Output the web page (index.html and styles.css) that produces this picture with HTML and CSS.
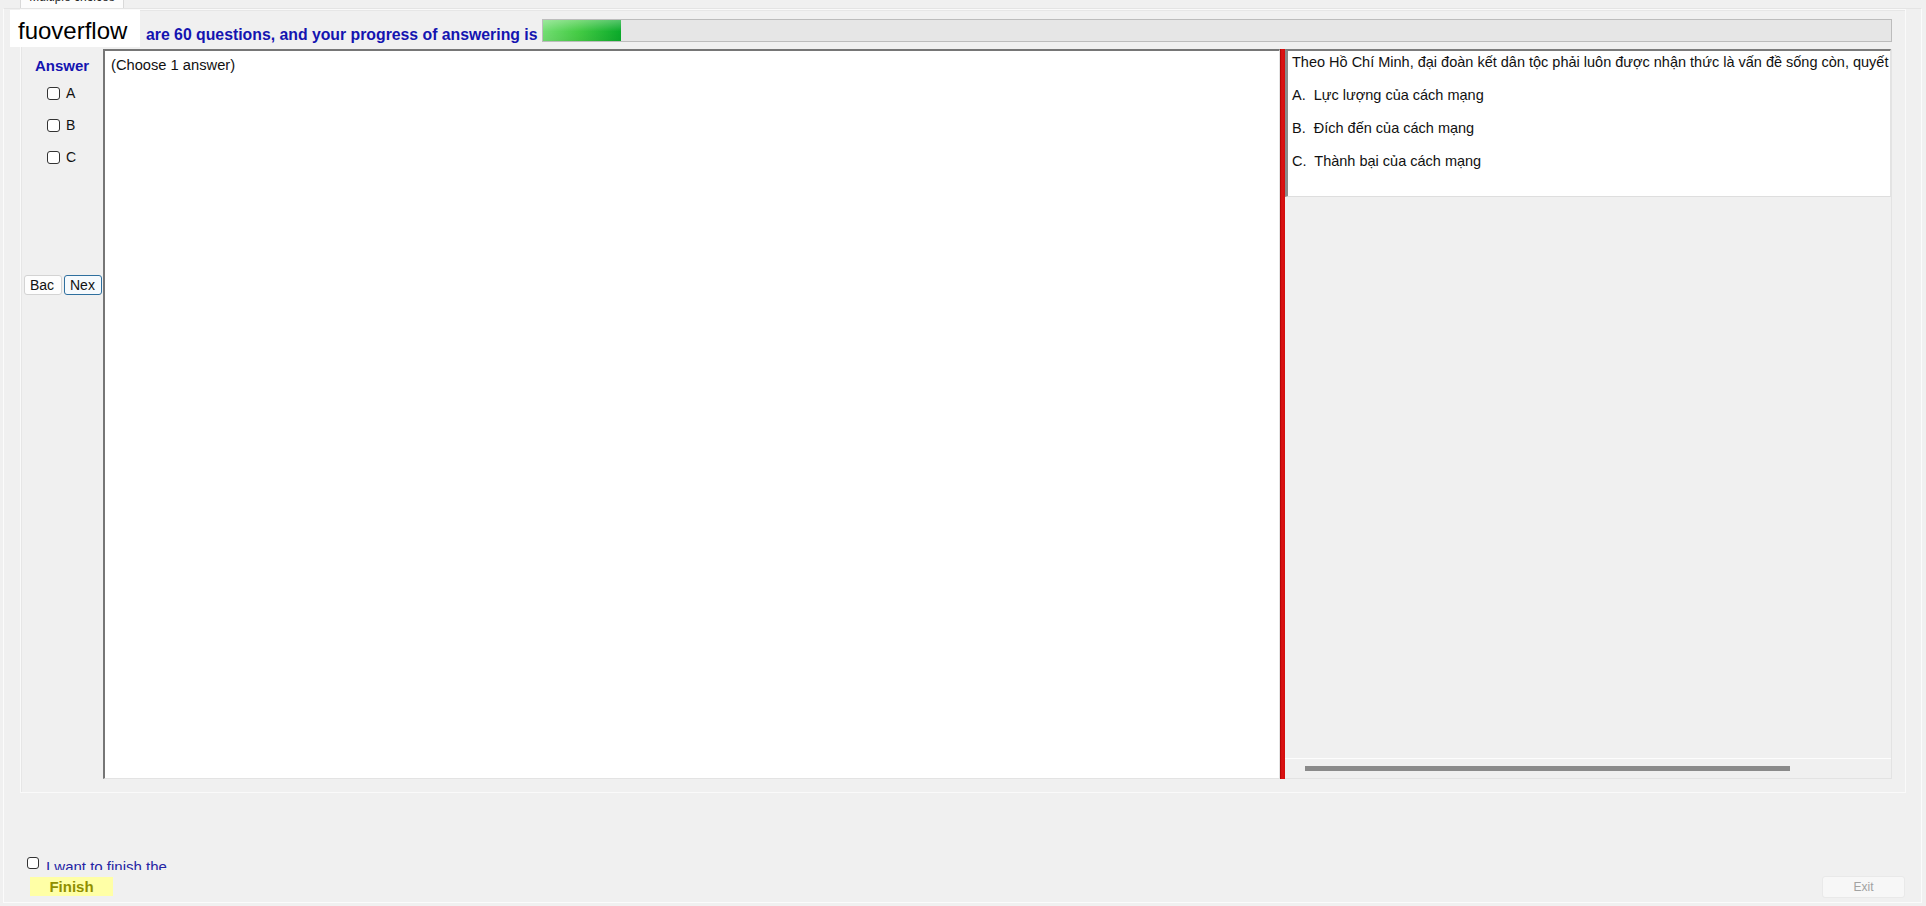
FILE: index.html
```html
<!DOCTYPE html>
<html lang="vi">
<head>
<meta charset="utf-8">
<title>Multiple choices</title>
<link rel="stylesheet" href="styles.css">
</head>
<body>
<div class="app">
  <div class="tabstrip"><div class="tab"><span class="tab-label">Multiple choices</span></div></div>
  <div class="tabpage">
    <div class="group">
      <div class="header">
        <div class="progress-text">are 60 questions, and your progress of answering is</div>
        <div class="progress"><div class="progress-fill" style="width:78px"></div></div>
      </div>
      <div class="main">
        <div class="answers">
          <div class="answers-title">Answer</div>
          <label class="opt"><input type="checkbox" class="cb"><span>A</span></label>
          <label class="opt"><input type="checkbox" class="cb"><span>B</span></label>
          <label class="opt"><input type="checkbox" class="cb"><span>C</span></label>
          <div class="nav">
            <button class="btn">Bac</button>
            <button class="btn btn-focus">Nex</button>
          </div>
        </div>
        <div class="question"><div class="question-text">(Choose 1 answer)</div></div>
        <div class="splitter"></div>
        <div class="viewer">
          <div class="doc">
            <div class="doc-line">Theo Hồ Chí Minh, đại đoàn kết dân tộc phải luôn được nhận thức là vấn đề sống còn, quyết</div>
            <div class="doc-line">A.  Lực lượng của cách mạng</div>
            <div class="doc-line">B.  Đích đến của cách mạng</div>
            <div class="doc-line">C.  Thành bại của cách mạng</div>
          </div>
          <div class="doc-empty"></div>
          <div class="hscroll"><div class="hscroll-thumb"></div></div>
        </div>
      </div>
    </div>
    <div class="footer">
      <label class="confirm"><input type="checkbox" class="cb cb-small"><span>I want to finish the</span></label>
      <div class="actions">
        <button class="finish">Finish</button>
        <button class="exit">Exit</button>
      </div>
    </div>
  </div>
  <div class="brand">fuoverflow</div>
</div>
</body>
</html>
```
FILE: styles.css
```css
* { box-sizing: border-box; }
html, body { margin: 0; padding: 0; }
body {
  background: #f0f0f0;
  font-family: "Liberation Sans", Arial, sans-serif;
  color: #000;
}
.app {
  position: relative;
  width: 1926px;
  height: 906px;
  overflow: hidden;
  background: #f0f0f0;
}
.tabstrip {
  height: 8px;
  padding-left: 20px;
  display: flex;
}
.tab {
  width: 104px;
  height: 8px;
  background: #fcfcfc;
  border-left: 1px solid #d9d9d9;
  border-right: 1px solid #d9d9d9;
  overflow: hidden;
  font-size: 12px;
  color: #222;
  text-align: center;
}
.tab-label {
  display: block;
  line-height: 14px;
  margin-top: -10px;
}
.tabpage {
  margin-left: 3px;
  width: 1919px;
  height: 895px;
  border: 1px solid #fbfbfb;
  border-top-color: #e4e4e4;
  padding-left: 16px;
}
.group {
  width: 1886px;
  height: 784px;
  border: 1px solid #fafafa;
  box-shadow: inset 1px 1px 0 #e6e6e6;
  padding-right: 13px;
}
.header {
  display: flex;
  height: 39px;
  padding-top: 9px;
}
.progress-text {
  margin-left: 125px;
  width: 396px;
  margin-top: 7px;
  font-size: 15.8px;
  line-height: 17px;
  font-weight: bold;
  color: #1414b0;
  white-space: nowrap;
}
.progress {
  width: 1351px;
  height: 23px;
  border: 1px solid #bcbcbc;
  background: #e6e6e6;
}
.progress-fill {
  height: 100%;
  background:
    linear-gradient(to bottom, rgba(255,255,255,0.3), rgba(255,255,255,0) 55%, rgba(0,0,0,0.04)),
    linear-gradient(to right, #72de72, #45cc45 45%, #0aaa2a);
}
.main {
  display: flex;
  height: 730px;
}
.answers {
  width: 82px;
  padding-top: 8px;
  display: flex;
  flex-direction: column;
}
.answers-title {
  font-size: 15px;
  line-height: 17px;
  font-weight: bold;
  color: #1414b0;
  text-align: center;
  margin-bottom: 3px;
}
.opt {
  display: flex;
  align-items: center;
  height: 32px;
  padding-left: 26px;
  gap: 6px;
  font-size: 14px;
  color: #111;
}
.cb {
  appearance: none;
  -webkit-appearance: none;
  width: 13px;
  height: 13px;
  margin: 0;
  border: 1px solid #333;
  border-radius: 3px;
  background: #fff;
  flex: none;
}
.nav {
  display: flex;
  gap: 2px;
  margin-top: 102px;
  padding-left: 3px;
}
.btn {
  width: 38px;
  height: 20px;
  padding: 0 0 0 5px;
  font-family: "Liberation Sans", Arial, sans-serif;
  font-size: 14px;
  line-height: 18px;
  text-align: left;
  color: #111;
  background: #fdfdfd;
  border: 1px solid #d3d3d3;
  border-radius: 3px;
  overflow: hidden;
}
.btn-focus {
  border-color: #2e6f9e;
  background: #f6fafd;
}
.question {
  width: 1177px;
  background: #fff;
  border-style: solid;
  border-width: 2px 1px 1px 2px;
  border-color: #767676 #e3e3e3 #e3e3e3 #767676;
  padding: 6px 0 0 6px;
}
.question-text {
  font-size: 14.7px;
  line-height: 16px;
  color: #111;
}
.splitter {
  width: 5px;
  height: 730px;
  background: linear-gradient(to right, #a80000, #dc1414 35%, #d40c0c);
}
.viewer {
  width: 607px;
  display: flex;
  flex-direction: column;
  border-right: 1px solid #e3e3e3;
  border-bottom: 1px solid #e3e3e3;
}
.doc {
  height: 148px;
  background: #fff;
  border-style: solid;
  border-width: 2px 1px 1px 3px;
  border-color: #7c7c7c #e3e3e3 #dedede #8a8a8a;
  padding: 3px 0 0 4px;
  overflow: hidden;
}
.doc-line {
  font-size: 14.5px;
  line-height: 16px;
  margin-bottom: 17px;
  white-space: pre;
  color: #111;
}
.doc-empty {
  flex: 1;
  background: #f0f0f0;
  border-bottom: 1px solid #fdfdfd;
}
.hscroll {
  height: 19px;
  padding: 7px 0 0 20px;
}
.hscroll-thumb {
  width: 485px;
  height: 5px;
  background: #8a8a8a;
}
.footer {
  padding-top: 64px;
  display: flex;
  flex-direction: column;
}
.confirm {
  display: flex;
  align-items: flex-start;
  height: 13px;
  overflow: hidden;
  margin-left: 7px;
  gap: 7px;
  font-size: 15px;
  line-height: 17px;
  color: #2424a4;
}
.confirm span { margin-top: 1px; }
.cb-small { width: 12px; height: 12px; }
.actions {
  display: flex;
  justify-content: space-between;
  align-items: flex-start;
  margin-top: 6px;
  margin-right: 16px;
}
.finish {
  margin-top: 1px;
  margin-left: 10px;
  width: 83px;
  height: 19px;
  padding: 0;
  border: none;
  background: #ffffa6;
  font-family: "Liberation Sans", Arial, sans-serif;
  font-size: 15px;
  font-weight: bold;
  line-height: 19px;
  color: #8f8f00;
}
.exit {
  width: 83px;
  height: 22px;
  padding: 0;
  border: 1px solid #e9e9e9;
  border-radius: 3px;
  background: #f7f7f7;
  font-family: "Liberation Sans", Arial, sans-serif;
  font-size: 12px;
  color: #a2a2a2;
}
.brand {
  position: absolute;
  left: 10px;
  top: 10px;
  width: 130px;
  height: 37px;
  background: #fff;
  padding: 5px 0 0 8px;
  font-size: 24px;
  line-height: 32px;
  color: #000;
}
```
